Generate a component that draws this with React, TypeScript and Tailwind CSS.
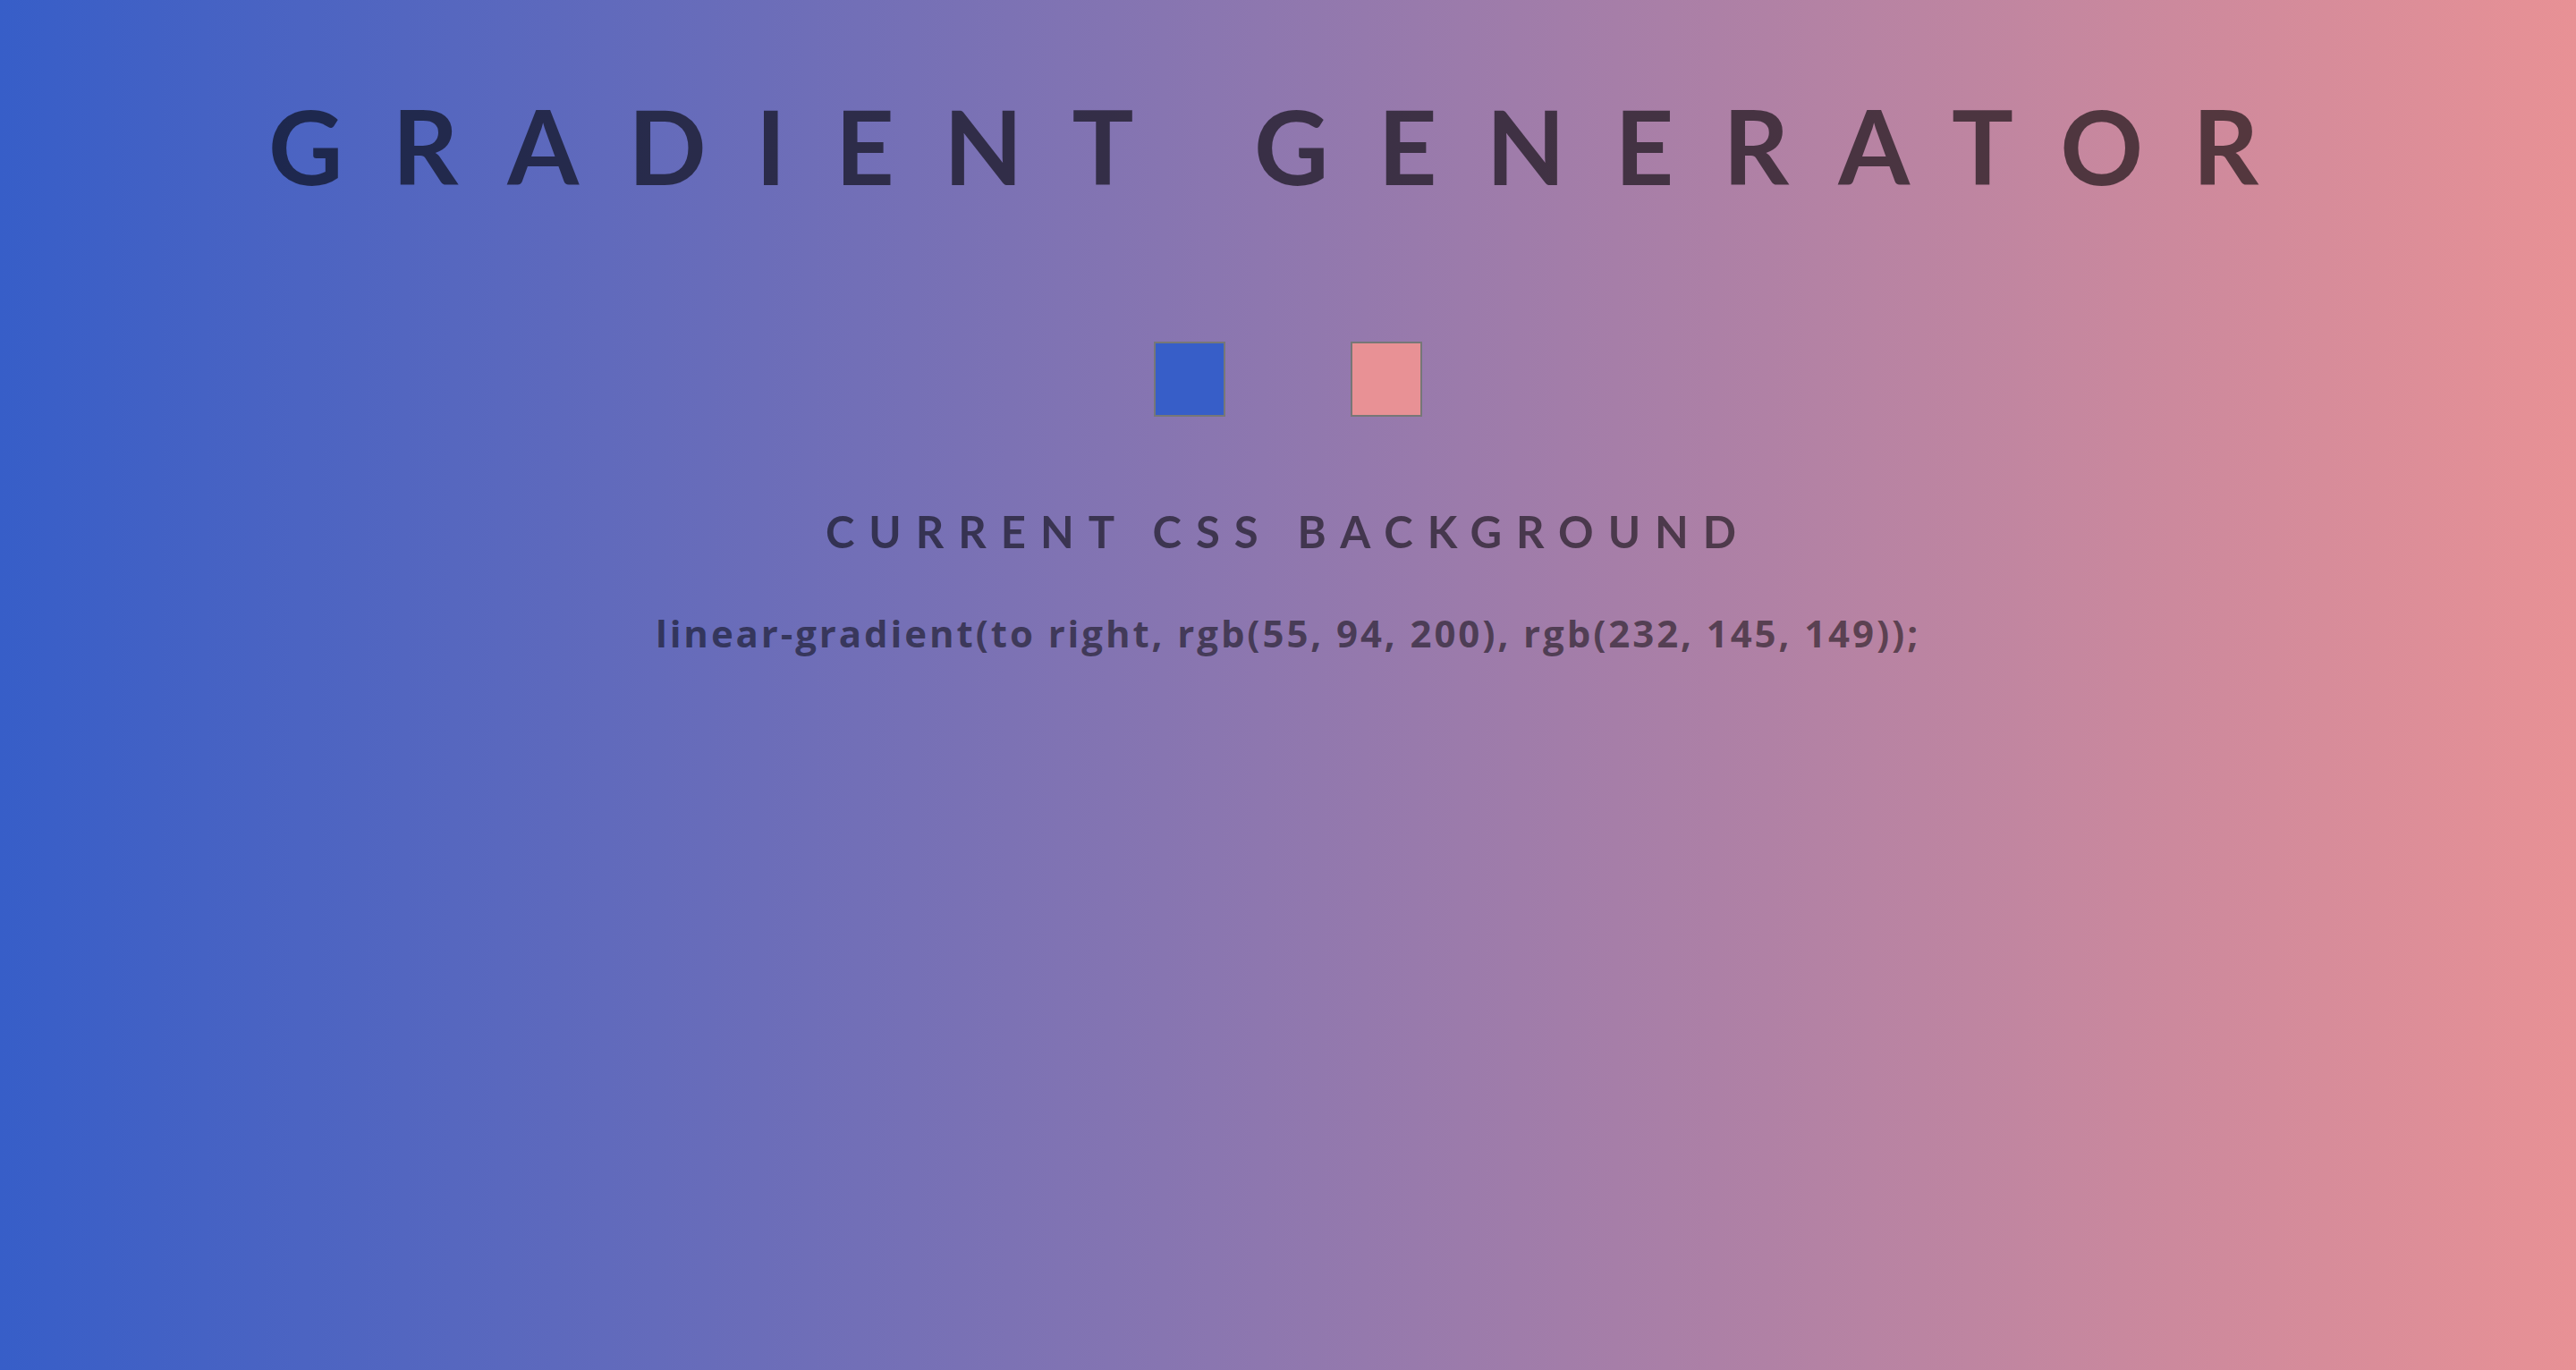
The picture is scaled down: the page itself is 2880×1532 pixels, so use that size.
const start = 'rgb(55, 94, 200)'
const end = 'rgb(232, 145, 149)'

function Swatch({ color }: { color: string }) {
  return (
    <div
      className="w-[80px] h-[84px] border-2 border-[#777777]"
      style={{ backgroundColor: color }}
    />
  )
}

export default function App() {
  return (
    <div className="min-h-screen w-full bg-[linear-gradient(to_right,rgb(55,94,200),rgb(232,145,149))] font-['Lato','Open_Sans',sans-serif] flex flex-col items-center">
      <h1 className="pt-[105px] text-[115px] leading-none font-bold tracking-[55px] text-black/60">
        GRADIENT GENERATOR
      </h1>

      <div className="mt-[162px] flex gap-[140px]">
        <Swatch color={start} />
        <Swatch color={end} />
      </div>

      <h2 className="mt-[104px] text-[49px] leading-none font-bold tracking-[16px] text-black/55">
        CURRENT CSS BACKGROUND
      </h2>

      <p className="mt-[68px] font-['Open_Sans','Lato',sans-serif] text-[42px] leading-none font-bold tracking-[2.9px] text-black/50">
        linear-gradient(to right, {start}, {end});
      </p>
    </div>
  )
}
